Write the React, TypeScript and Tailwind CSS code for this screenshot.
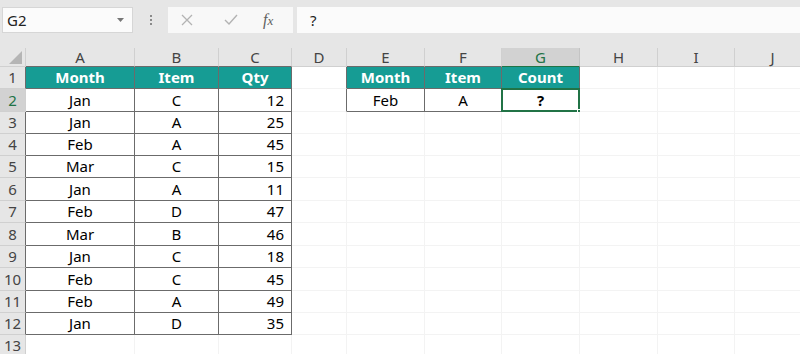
import React from "react";

const cols = [
  { key: "A", w: 109 },
  { key: "B", w: 84 },
  { key: "C", w: 73 },
  { key: "D", w: 55 },
  { key: "E", w: 78 },
  { key: "F", w: 77 },
  { key: "G", w: 78 },
  { key: "H", w: 78 },
  { key: "I", w: 77 },
  { key: "J", w: 76 },
];

const rowHeights = [22, 23, 22, 22, 22, 23, 22, 23, 22, 23, 22, 22, 22];

const data: string[][] = [
  ["Jan", "C", "12"],
  ["Jan", "A", "25"],
  ["Feb", "A", "45"],
  ["Mar", "C", "15"],
  ["Jan", "A", "11"],
  ["Feb", "D", "47"],
  ["Mar", "B", "46"],
  ["Jan", "C", "18"],
  ["Feb", "C", "45"],
  ["Feb", "A", "49"],
  ["Jan", "D", "35"],
];

// which cells are part of a bordered table (row index 1-based, col index 0-based)
function inTable(r: number, c: number) {
  if (r >= 1 && r <= 12 && c >= 0 && c <= 2) return true;
  if (r >= 1 && r <= 2 && c >= 4 && c <= 6) return true;
  return false;
}

function cellText(r: number, c: number): string {
  if (r === 1) {
    return ["Month", "Item", "Qty", "", "Month", "Item", "Count"][c] ?? "";
  }
  if (r >= 2 && r <= 12 && c <= 2) return data[r - 2][c];
  if (r === 2 && c === 4) return "Feb";
  if (r === 2 && c === 5) return "A";
  if (r === 2 && c === 6) return "?";
  return "";
}

function FormulaBar() {
  return (
    <div className="h-[48px] bg-[#e6e6e6] pt-[7px] flex items-start">
      <div className="ml-[2px] w-[131px] h-[26px] bg-[#fbfbfb] border border-[#d6d6d6] flex items-center justify-between pl-[4px] pr-[8px] text-[15px] text-[#222]">
        <span>G2</span>
        <svg width="7" height="4" viewBox="0 0 7 4">
          <path d="M0 0h7L3.5 4z" fill="#777" />
        </svg>
      </div>
      <div className="w-[35px] h-[26px] flex items-center justify-center">
        <div className="flex flex-col gap-[2px]">
          <span className="w-[2px] h-[2px] bg-[#8a8a8a]" />
          <span className="w-[2px] h-[2px] bg-[#8a8a8a]" />
          <span className="w-[2px] h-[2px] bg-[#8a8a8a]" />
        </div>
      </div>
      <div className="w-[125px] h-[26px] bg-[#f8f8f8] flex items-center text-[#a9a9a9]">
        <svg className="ml-[13px]" width="12" height="12" viewBox="0 0 12 12">
          <path d="M1 1l10 10M11 1L1 11" stroke="#b3b3b3" strokeWidth="1.3" />
        </svg>
        <svg className="ml-[31px]" width="14" height="12" viewBox="0 0 14 12">
          <path d="M1 6l4 4L13 1" stroke="#b3b3b3" strokeWidth="1.4" fill="none" />
        </svg>
        <span className="ml-[25px] italic text-[16px] text-[#606060] font-['Liberation_Serif',serif]">
          f<span className="text-[13px]">x</span>
        </span>
      </div>
      <div className="ml-[4px] flex-1 h-[26px] bg-[#fbfbfb] flex items-center pl-[13px] text-[15px] text-[#222]">
        ?
      </div>
    </div>
  );
}

export default function App() {
  return (
    <div className="w-[800px] h-[354px] overflow-hidden bg-white font-['Noto_Sans',sans-serif]">
      <FormulaBar />
      {/* column headers */}
      <div className="flex h-[19px] bg-[#e6e6e6]">
        <div className="w-[26px] shrink-0 relative border-r border-b border-[#d0d0d0] bg-[#e6e6e6]">
          <svg className="absolute right-[3px] bottom-[2px]" width="13" height="13" viewBox="0 0 13 13">
            <path d="M13 0V13H0z" fill="#b5b5b5" />
          </svg>
        </div>
        {cols.map((col, c) => (
          <div
            key={col.key}
            style={{ width: col.w }}
            className={`shrink-0 flex items-center justify-center text-[15px] border-r border-b ${
              col.key === "G"
                ? "bg-[#d2d2d2] text-[#217346] border-[#c4c4c4] border-b-[#217346]"
                : "bg-[#e6e6e6] text-[#444] border-[#d0d0d0]"
            } ${inTable(1, c) && col.key !== "G" ? "border-b-[#6b6b6b]" : ""}`}
          >
            {col.key}
          </div>
        ))}
      </div>
      {rowHeights.map((h, i) => {
        const r = i + 1;
        return (
          <div key={r} className="flex" style={{ height: h }}>
            <div
              className={`w-[26px] shrink-0 flex items-center justify-center text-[15px] border-b border-r ${
                r === 2
                  ? "bg-[#d2d2d2] text-[#217346] border-r-[#217346]"
                  : "bg-[#e6e6e6] text-[#444]"
              } border-b-[#d0d0d0] ${inTable(r, 0) && r !== 2 ? "border-r-[#6b6b6b]" : "border-r-[#d0d0d0]"}`}
            >
              {r}
            </div>
            {cols.map((col, c) => {
              const t = inTable(r, c);
              const darkR = t || inTable(r, c + 1);
              const darkB = t || inTable(r + 1, c);
              const header = r === 1 && t;
              const selected = r === 2 && c === 6;
              const text = cellText(r, c);
              return (
                <div
                  key={col.key}
                  style={{ width: col.w }}
                  className={`shrink-0 relative flex items-center text-[15px] border-r border-b ${
                    darkR ? "border-r-[#6b6b6b]" : "border-r-[#f3f3f3]"
                  } ${darkB ? "border-b-[#6b6b6b]" : "border-b-[#f3f3f3]"} ${
                    header ? "bg-[#169c94] text-white font-bold" : "bg-white text-black"
                  } ${c === 2 && r > 1 ? "justify-end pr-[7px]" : "justify-center"} ${
                    selected ? "font-bold" : ""
                  }`}
                >
                  {text}
                  {selected && (
                    <>
                      <div className="absolute -left-[1px] -top-[1px] -right-[1px] -bottom-[1px] border-2 border-[#217346]" />
                      <div className="absolute -right-[4px] -bottom-[4px] w-[6px] h-[6px] bg-[#217346] border border-white" />
                    </>
                  )}
                </div>
              );
            })}
          </div>
        );
      })}
    </div>
  );
}
